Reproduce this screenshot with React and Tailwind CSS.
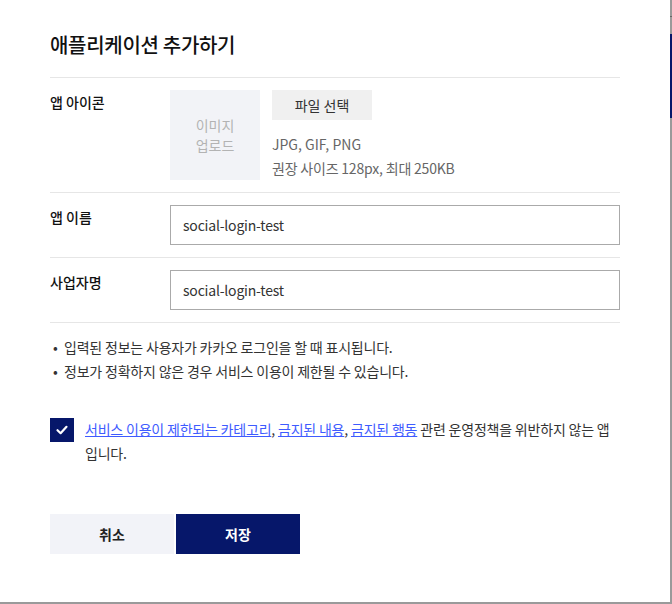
const font = { fontFamily: '"Noto Sans CJK KR", "Noto Sans", sans-serif' };

function Row({ label, children }) {
  return (
    <div className="flex border-b border-[#e6e6e6] py-[12px]">
      <div className="w-[120px] shrink-0 pt-[1px] text-[14px] font-medium leading-[22px] text-[#111]">{label}</div>
      <div className="flex-1">{children}</div>
    </div>
  );
}

export default function App() {
  return (
    <div className="h-[604px] w-[672px] bg-[#9a9a9a] overflow-hidden" style={font}>
      <div className="relative h-[602px] w-[670px] bg-white px-[50px]">
        <h1 className="pt-[31px] pb-[18px] text-[20px] font-medium leading-[28px] text-[#111] tracking-[-0.3px]">
          애플리케이션 추가하기
        </h1>

        <div className="w-[570px] border-t border-[#e6e6e6]">
          <Row label="앱 아이콘">
            <div className="flex gap-[12px]">
              <div className="flex h-[90px] w-[90px] items-center justify-center bg-[#f2f3f7] text-center text-[14px] leading-[20px] text-[#b3b3b3]">
                이미지
                <br />
                업로드
              </div>
              <div className="flex flex-col">
                <button className="h-[30px] w-[100px] bg-[#f0f0f0] text-[14px] text-[#333]">파일 선택</button>
                <p className="mt-[12px] text-[14px] leading-[24px] text-[#666]">JPG, GIF, PNG</p>
                <p className="text-[14px] leading-[24px] text-[#666] tracking-[-0.2px]">권장 사이즈 128px, 최대 250KB</p>
              </div>
            </div>
          </Row>

          <Row label="앱 이름">
            <div className="flex h-[40px] items-center border border-[#aaa] px-[12px] text-[14px] text-[#333] tracking-[-0.2px]">
              social-login-test
            </div>
          </Row>

          <Row label="사업자명">
            <div className="flex h-[40px] items-center border border-[#aaa] px-[12px] text-[14px] text-[#333] tracking-[-0.2px]">
              social-login-test
            </div>
          </Row>
        </div>

        <ul className="pt-[12px] text-[14px] leading-[24px] text-[#333] tracking-[-0.2px]">
          <li className="flex">
            <span className="w-[14px] pl-[3px]">•</span>입력된 정보는 사용자가 카카오 로그인을 할 때 표시됩니다.
          </li>
          <li className="flex">
            <span className="w-[14px] pl-[3px]">•</span>정보가 정확하지 않은 경우 서비스 이용이 제한될 수 있습니다.
          </li>
        </ul>

        <label className="mt-[34px] flex w-[570px] gap-[11px]">
          <span className="mt-[1px] flex h-[24px] w-[24px] shrink-0 items-center justify-center bg-[#06176a]">
            <svg width="14" height="14" viewBox="0 0 14 14" fill="none">
              <path d="M2.5 7.2 L5.6 10.2 L11.5 3.8" stroke="white" strokeWidth="2.2" strokeLinecap="round" strokeLinejoin="round" />
            </svg>
          </span>
          <span className="text-[14px] leading-[24px] text-[#333] tracking-[-0.2px]">
            <a className="text-[#3e5bff] underline">서비스 이용이 제한되는 카테고리</a>,{" "}
            <a className="text-[#3e5bff] underline">금지된 내용</a>,{" "}
            <a className="text-[#3e5bff] underline">금지된 행동</a> 관련 운영정책을 위반하지 않는 앱입니다.
          </span>
        </label>

        <div className="mt-[49px] flex gap-[2px]">
          <button className="h-[40px] w-[124px] bg-[#f2f3f8] text-[14px] font-bold text-[#222]">취소</button>
          <button className="h-[40px] w-[124px] bg-[#06176a] text-[14px] font-bold text-white">저장</button>
        </div>

        <div className="absolute left-[670px] top-[16px] h-[1px] w-[2px] bg-[#666]" />
        <div className="absolute left-[670px] top-[34px] h-[84px] w-[2px] bg-[#06176a]" />
      </div>
    </div>
  );
}
